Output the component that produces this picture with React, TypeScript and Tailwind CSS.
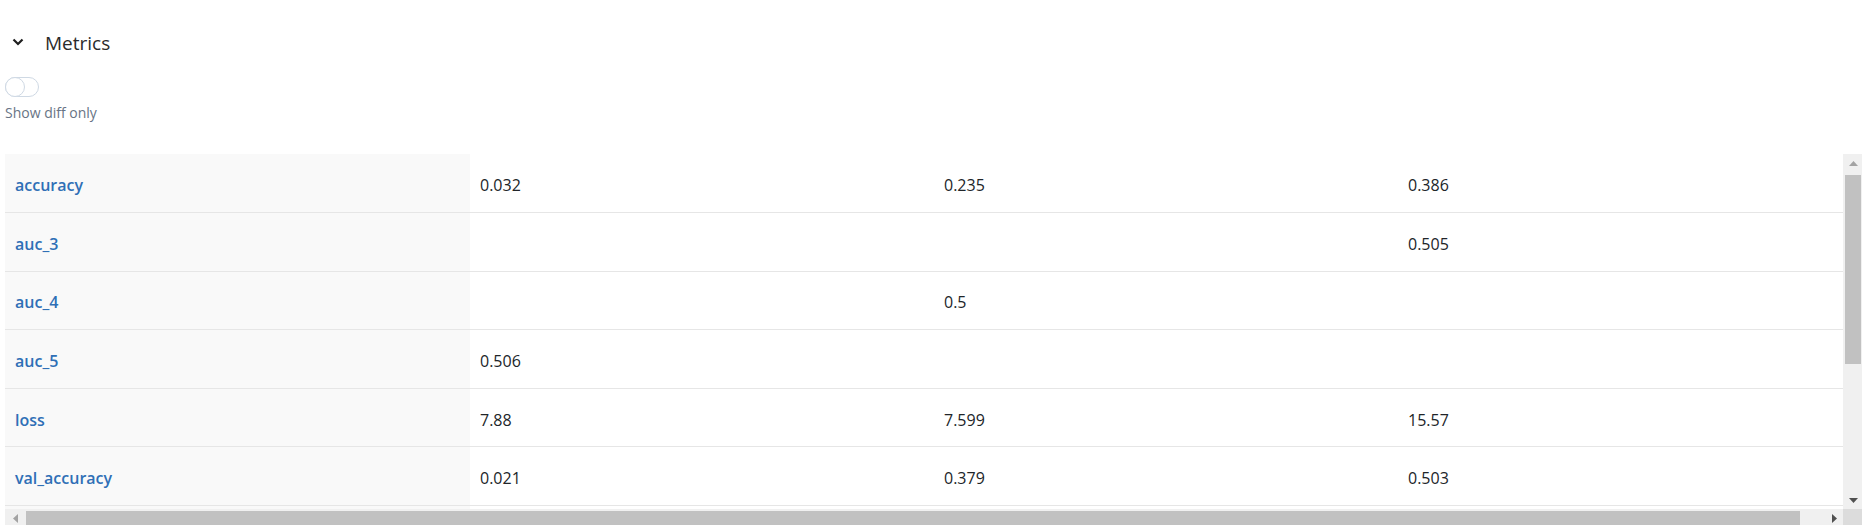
import React from "react";

const rows: string[][] = [
  ["accuracy", "0.032", "0.235", "0.386"],
  ["auc_3", "", "", "0.505"],
  ["auc_4", "", "0.5", ""],
  ["auc_5", "0.506", "", ""],
  ["loss", "7.88", "7.599", "15.57"],
  ["val_accuracy", "0.021", "0.379", "0.503"],
  ["val_auc_3", "", "", "0.5"],
  ["val_auc_4", "", "0.5", ""],
  ["val_auc_5", "0.5", "", ""],
  ["val_loss", "7.64", "8.352", "7.873"],
];

function Tri({ dir, color }: { dir: "up" | "down" | "left" | "right"; color: string }) {
  if (dir === "up")
    return (
      <svg width="9" height="5" viewBox="0 0 9 5">
        <polygon points="0,5 4.5,0 9,5" fill={color} />
      </svg>
    );
  if (dir === "down")
    return (
      <svg width="9" height="5" viewBox="0 0 9 5">
        <polygon points="0,0 4.5,5 9,0" fill={color} />
      </svg>
    );
  if (dir === "left")
    return (
      <svg width="5" height="9" viewBox="0 0 5 9">
        <polygon points="5,0 0,4.5 5,9" fill={color} />
      </svg>
    );
  return (
    <svg width="5" height="9" viewBox="0 0 5 9">
      <polygon points="0,0 5,4.5 0,9" fill={color} />
    </svg>
  );
}

export default function App() {
  return (
    <div
      className="w-full h-[525px] overflow-hidden bg-white pl-[5px] pt-[29px] text-[#212529]"
      style={{ fontFamily: '"Open Sans", "Noto Sans", sans-serif' }}
    >
      <div className="flex items-center h-[28px] -ml-[5px]">
        <svg
          width="12"
          height="8"
          viewBox="0 0 12 8"
          className="ml-[12px] -mt-[3px] shrink-0"
        >
          <path
            d="M1.5 1.5 L6 6 L10.5 1.5"
            fill="none"
            stroke="#1f1f1f"
            strokeWidth="2.2"
          />
        </svg>
        <span className="ml-[21px] text-[19px] leading-[28px] text-[#2b2b2b]">
          Metrics
        </span>
      </div>

      <div className="mt-[20px] relative w-[34px] h-[20px] rounded-full border border-[#cfd9e4] bg-white">
        <div className="absolute -left-px -top-px w-[20px] h-[20px] rounded-full border border-[#cfd9e4] bg-white" />
      </div>
      <div className="mt-[6px] text-[14px] leading-[20px] text-[#687485]">
        Show diff only
      </div>

      <div className="mt-[31.4px] h-[374px] flex flex-col">
        <div className="flex h-[354.6px]">
          <div className="flex-1 min-w-0 overflow-hidden">
            <div className="w-[1857px]">
              {rows.map((r) => (
                <div
                  key={r[0]}
                  className="grid grid-cols-[465px_464px_464px_464px] h-[58.6px] border-b border-[#e6e6e6]"
                >
                  <div className="flex items-center bg-[#f9f9f9] px-[10px] pt-[4px] text-[16px] leading-[24px] font-semibold text-[#2f6fb6]">
                    {r[0]}
                  </div>
                  {r.slice(1).map((v, i) => (
                    <div
                      key={i}
                      className="flex items-center px-[10px] pt-[4px] text-[16px] leading-[24px] text-[#212529]"
                    >
                      {v}
                    </div>
                  ))}
                </div>
              ))}
            </div>
          </div>
          <div className="w-[19px] shrink-0 bg-[#f0f0f0] flex flex-col">
            <div className="h-[17px] flex items-center justify-center pl-[1px] pt-[1px]">
              <Tri dir="up" color="#a3a3a3" />
            </div>
            <div className="mt-[4px] ml-[2px] w-[16px] h-[189px] bg-[#c1c1c1]" />
            <div className="flex-1" />
            <div className="h-[17px] flex items-center justify-center pl-[1px]">
              <Tri dir="down" color="#505050" />
            </div>
          </div>
        </div>
        <div className="flex h-[19px] bg-[#f0f0f0]">
          <div className="w-[21px] shrink-0 flex items-center justify-center pt-[1px]">
            <Tri dir="left" color="#a3a3a3" />
          </div>
          <div className="mt-[2px] w-[1774px] h-[16px] bg-[#c1c1c1] shrink-0" />
          <div className="flex-1" />
          <div className="w-[17px] shrink-0 flex items-center justify-center pt-[1px]">
            <Tri dir="right" color="#505050" />
          </div>
          <div className="w-[19px] shrink-0 bg-[#dcdcdc]" />
        </div>
      </div>
    </div>
  );
}
